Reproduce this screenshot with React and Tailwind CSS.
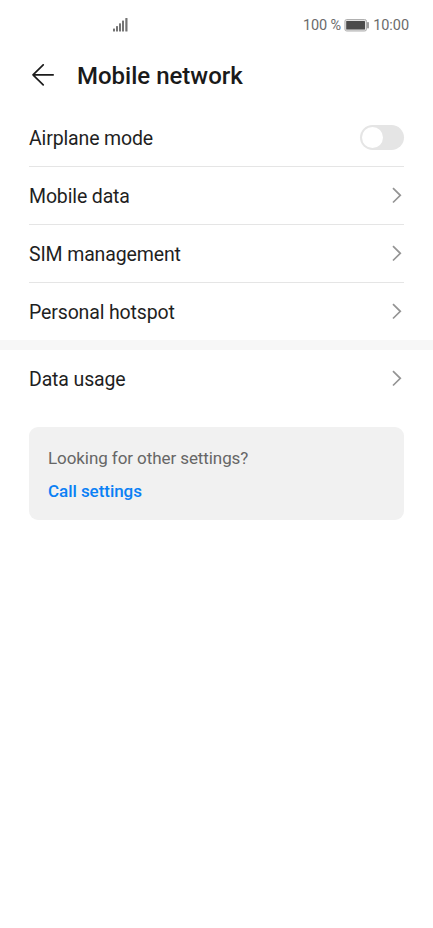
import clsx from 'clsx'

const GROUPS = [
  [
    { label: 'Airplane mode', control: 'switch' },
    { label: 'Mobile data' },
    { label: 'SIM management' },
    { label: 'Personal hotspot' },
  ],
  [{ label: 'Data usage' }],
]

function SignalIcon() {
  return (
    <svg width="15" height="14" viewBox="0 0 15 14" fill="#747474" aria-hidden="true">
      <rect x="0" y="10.5" width="2" height="3" rx="0.5" />
      <rect x="3" y="8" width="2" height="5.5" rx="0.5" />
      <rect x="6" y="5.2" width="2" height="8.3" rx="0.5" />
      <rect x="9" y="2.6" width="2" height="10.9" rx="0.5" />
      <rect x="12.3" y="0" width="2.2" height="13.5" rx="0.5" />
    </svg>
  )
}

function BatteryIcon() {
  return (
    <svg width="25" height="13" viewBox="0 0 25 13" aria-hidden="true">
      <rect x="0.9" y="0.5" width="21.6" height="11.5" rx="1.8" fill="#e2e2e2" stroke="#b0b0b0" />
      <rect x="2.2" y="2" width="18.8" height="8.5" rx="0.5" fill="#4b4b4b" />
      <rect x="23.2" y="3" width="1.6" height="6.5" rx="0.7" fill="#888" />
    </svg>
  )
}

function StatusBar() {
  return (
    <div className="flex h-[50px] items-center justify-between pl-[113px] pr-6 text-[14.5px] text-[#6b6b6b]">
      <SignalIcon />
      <div className="flex items-center pt-[2px]">
        <span className="tracking-[-0.1px]">100 %</span>
        <span className="ml-[3px] mr-[4px] pb-[2px]"><BatteryIcon /></span>
        <span className="tracking-[-0.05px]">10:00</span>
      </div>
    </div>
  )
}

function Header() {
  return (
    <header className="flex h-[59px] items-center pb-[9px] pl-8">
      <button type="button" aria-label="Back" className="mr-[23px]">
        <svg width="22" height="22" viewBox="0 0 22 22" fill="none" stroke="#1c1c1c" strokeWidth="1.7" strokeLinecap="round" strokeLinejoin="round" aria-hidden="true">
          <path d="M11.2 0.8 1 10.8l10.2 10M1 10.8H21.2" />
        </svg>
      </button>
      <h1 className="pt-px text-[24px] font-medium leading-none text-[#1a1a1a]">Mobile network</h1>
    </header>
  )
}

function Chevron() {
  return (
    <svg className="mr-[2px]" width="10" height="17" viewBox="0 0 10 17" fill="none" stroke="#949494" strokeWidth="1.7" aria-hidden="true">
      <path d="M1 1.1l7.3 7.2L1 15.5" />
    </svg>
  )
}

function Switch() {
  return (
    <button
      type="button"
      role="switch"
      aria-checked="false"
      aria-label="Airplane mode"
      className="flex h-[25px] w-[44px] items-center rounded-full bg-[#e5e5e5] px-[2px]"
    >
      <span className="size-[21px] rounded-full bg-white" />
    </button>
  )
}

function Row({ label, control, last }) {
  return (
    <li className={clsx('flex items-center justify-between', last ? 'h-[57px]' : 'h-[58px] border-b border-[#e5e5e5]')}>
      <span className="pt-[2px] text-[19.5px] tracking-[-0.14px] text-[#1f1f1f]">{label}</span>
      {control === 'switch' ? <Switch /> : <Chevron />}
    </li>
  )
}

export default function App() {
  return (
    <main className="h-[928px] w-[433px] overflow-hidden bg-white font-['Roboto',sans-serif]">
      <StatusBar />
      <Header />
      {GROUPS.map((rows, i) => (
        <ul key={i} className={clsx('px-[29px]', i > 0 && 'border-t-[10px] border-[#f7f7f7]')}>
          {rows.map((row, j) => (
            <Row key={row.label} {...row} last={j === rows.length - 1} />
          ))}
        </ul>
      ))}
      <section className="mx-[29px] mt-5 h-[93px] rounded-[9px] bg-[#f1f1f1] px-[19px] pt-[19px]">
        <p className="text-[17px] leading-6 tracking-[-0.08px] text-[#666]">Looking for other settings?</p>
        <a href="#call" className="mt-[9px] block text-[17px] font-medium leading-6 tracking-[-0.05px] text-[#0a80f5]">Call settings</a>
      </section>
    </main>
  )
}
